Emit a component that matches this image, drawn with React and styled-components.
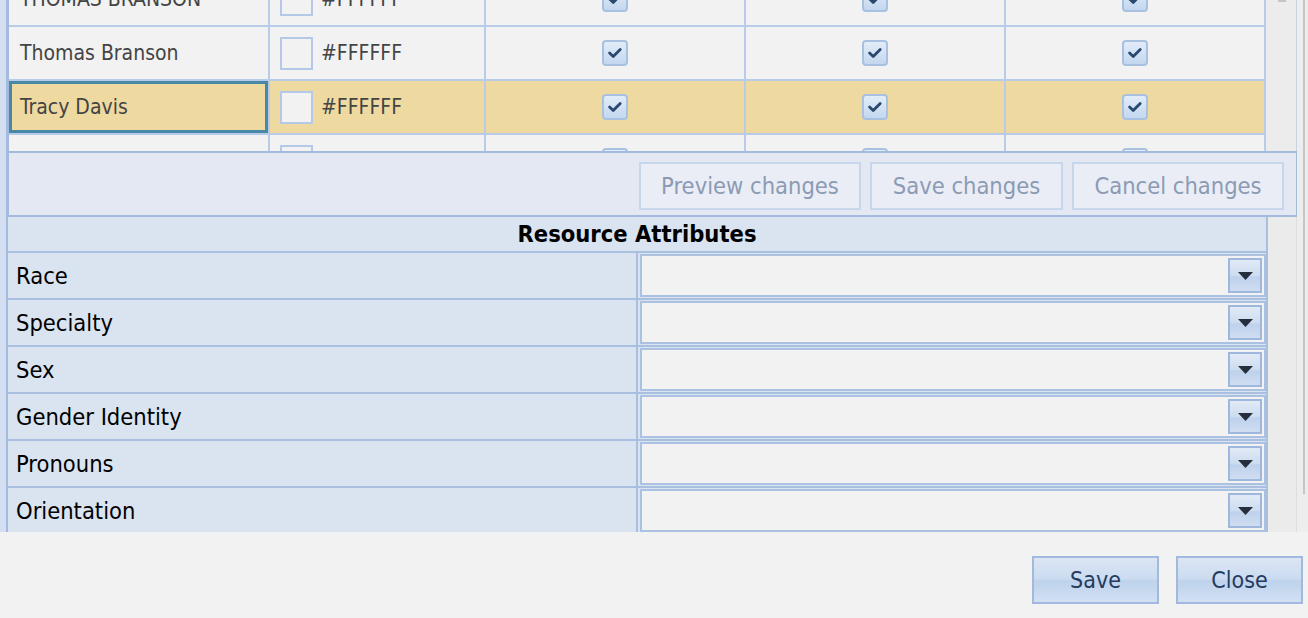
import React from "react";
import styled, { createGlobalStyle } from "styled-components";

const GlobalStyle = createGlobalStyle`
  html, body {
    margin: 0;
    padding: 0;
    background: #f2f2f2;
    overflow: hidden;
  }
  body {
    font-family: "DejaVu Sans Condensed", "DejaVu Sans", sans-serif;
    font-stretch: condensed;
  }
`;

const people = [
  { name: "THOMAS BRANSON", color: "#FFFFFF" },
  { name: "Thomas Branson", color: "#FFFFFF" },
  { name: "Tracy Davis", color: "#FFFFFF", selected: true },
  { name: "", color: "" },
];

const attributes = ["Race", "Specialty", "Sex", "Gender Identity", "Pronouns", "Orientation"];

const Check = () => (
  <CheckBox>
    <svg width="18" height="18" viewBox="0 0 18 18">
      <path d="M3.6 9 L7.2 12.4 L14.2 5.4" fill="none" stroke="#2a4870" strokeWidth="2.8" strokeLinecap="round" strokeLinejoin="round" />
    </svg>
  </CheckBox>
);

const App = () => {
  return (
    <Page>
      <GlobalStyle />
      <Workspace>
        <FormPanel>
          <FormBody>
            <GridPanel>
              <GridBody>
                <GridViewport>
                  <GridTable>
                    {people.map((p, i) => (
                      <GridRow key={i} $selected={p.selected}>
                        <NameCell $selected={p.selected}>{p.name}</NameCell>
                        <ColorCell>
                          <Swatch />
                          <span>{p.color}</span>
                        </ColorCell>
                        <CheckCell><Check /></CheckCell>
                        <CheckCell><Check /></CheckCell>
                        <CheckCell><Check /></CheckCell>
                      </GridRow>
                    ))}
                  </GridTable>
                </GridViewport>
                <GridScrollbar>
                  <ScrollNub />
                </GridScrollbar>
              </GridBody>
              <Toolbar>
                <ToolButton $w={222}>Preview changes</ToolButton>
                <ToolButton $w={193}>Save changes</ToolButton>
                <ToolButton $w={212}>Cancel changes</ToolButton>
              </Toolbar>
            </GridPanel>
            <AttrSection>
              <AttrTable>
                <AttrHeader>Resource Attributes</AttrHeader>
                {attributes.map((a) => (
                  <AttrRow key={a}>
                    <AttrLabel>{a}</AttrLabel>
                    <AttrValue>
                      <Combo>
                        <ComboTrigger>
                          <svg width="15" height="8" viewBox="0 0 15 8">
                            <polygon points="0,0 15,0 7.5,8" fill="#262e3e" />
                          </svg>
                        </ComboTrigger>
                      </Combo>
                    </AttrValue>
                  </AttrRow>
                ))}
              </AttrTable>
              <AttrFiller />
            </AttrSection>
          </FormBody>
        </FormPanel>
        <OuterScrollbar>
          <OuterThumb />
        </OuterScrollbar>
      </Workspace>
      <Footer>
        <FooterButton>Save</FooterButton>
        <FooterButton>Close</FooterButton>
      </Footer>
    </Page>
  );
};

const Page = styled.div`
  width: 1308px;
  height: 618px;
  display: flex;
  flex-direction: column;
  background: #f2f2f2;
`;

const Workspace = styled.div`
  display: flex;
  height: 532px;
  overflow: hidden;
`;

const FormPanel = styled.div`
  flex: 1;
  display: flex;
  border-left: 6px solid #d3def0;
  min-width: 0;
`;

const FormBody = styled.div`
  flex: 1;
  display: flex;
  flex-direction: column;
  border-left: 2px solid #a3b9de;
  min-width: 0;
`;

const GridPanel = styled.div`
  display: flex;
  flex-direction: column;
  border-left: 1px solid #a3b9de;
`;

const GridBody = styled.div`
  display: flex;
  height: 151px;
`;

const GridViewport = styled.div`
  width: 1257px;
  overflow: hidden;
`;

const GridTable = styled.div`
  margin-top: -27px;
`;

const GridRow = styled.div`
  display: flex;
  height: 54px;
  box-sizing: border-box;
  border-bottom: 2px solid #b8cce9;
  background: ${({ $selected }) => ($selected ? "#eed9a1" : "#f2f2f2")};
`;

const CellBase = styled.div`
  box-sizing: border-box;
  border-right: 2px solid #b8cce9;
  display: flex;
  align-items: center;
  font-size: 21px;
  color: #444;
  white-space: nowrap;
`;

const NameCell = styled(CellBase)`
  width: 261px;
  padding-left: 11px;
  box-shadow: ${({ $selected }) => ($selected ? "inset 0 0 0 3px #4788a7" : "none")};
`;

const ColorCell = styled(CellBase)`
  width: 216px;
  padding-left: 10px;
  gap: 8px;
`;

const Swatch = styled.span`
  width: 33px;
  height: 33px;
  box-sizing: border-box;
  border: 2px solid #b4c9e7;
  background: #f2f2f2;
`;

const CheckCell = styled(CellBase)`
  width: 260px;
  justify-content: center;
`;

const CheckBox = styled.span`
  width: 26px;
  height: 26px;
  box-sizing: border-box;
  border: 2px solid #a9c1e1;
  border-radius: 4px;
  background: linear-gradient(#e3edf9, #c3d7ef);
  display: flex;
  align-items: center;
  justify-content: center;
`;

const GridScrollbar = styled.div`
  width: 30px;
  background: #ececec;
  border-right: 1px solid #c9d2df;
`;

const ScrollNub = styled.div`
  width: 8px;
  height: 2px;
  margin-left: 12px;
  background: #c4c4c4;
`;

const Toolbar = styled.div`
  height: 66px;
  box-sizing: border-box;
  display: flex;
  justify-content: flex-end;
  align-items: flex-start;
  gap: 9px;
  padding: 9px 12px 0 0;
  background: #e3e8f3;
  border-top: 2px solid #a3b9de;
  border-bottom: 2px solid #a3b9de;
  border-right: 1px solid #a3b9de;
`;

const ToolButton = styled.button`
  width: ${({ $w }) => $w}px;
  height: 48px;
  box-sizing: border-box;
  border: 2px solid #c8d6ec;
  background: #eaedf5;
  color: #8b9bb4;
  font-family: inherit;
  font-stretch: condensed;
  font-size: 23.5px;
  padding: 0;
`;

const AttrSection = styled.div`
  flex: 1;
  display: flex;
`;

const AttrTable = styled.div`
  width: 1260px;
  box-sizing: border-box;
  background: #dae3f0;
  border-right: 2px solid #a8bfe0;
  display: flex;
  flex-direction: column;
`;

const AttrHeader = styled.div`
  height: 36px;
  flex-shrink: 0;
  box-sizing: border-box;
  border-bottom: 2px solid #a8bfe0;
  display: flex;
  align-items: center;
  justify-content: center;
  font-weight: bold;
  font-size: 23.5px;
  color: #000;
`;

const AttrRow = styled.div`
  display: grid;
  grid-template-columns: 630px 1fr;
  height: 47px;
  flex-shrink: 0;
  box-sizing: border-box;
  border-bottom: 2px solid #a8bfe0;
`;

const AttrLabel = styled.div`
  box-sizing: border-box;
  border-right: 2px solid #a8bfe0;
  padding-left: 8px;
  display: flex;
  align-items: center;
  font-size: 23.5px;
  color: #000;
`;

const AttrValue = styled.div`
  padding: 1px 0 1px 2px;
  display: flex;
`;

const Combo = styled.div`
  flex: 1;
  box-sizing: border-box;
  display: flex;
  justify-content: flex-end;
  align-items: center;
  padding-right: 2px;
  border: 2px solid #abc1e1;
  background: #f2f2f2;
`;

const ComboTrigger = styled.span`
  width: 34px;
  height: 35px;
  box-sizing: border-box;
  border: 2px solid #9db7dd;
  background: linear-gradient(#e2eaf6, #cddcf0 50%, #bed1ec 55%, #d0ddf1);
  display: flex;
  align-items: center;
  justify-content: center;
`;

const AttrFiller = styled.div`
  flex: 1;
  background: #ebebeb;
  border-right: 1px solid #dedede;
`;

const OuterScrollbar = styled.div`
  width: 11px;
  background: #ededed;
  display: flex;
`;

const OuterThumb = styled.div`
  margin-left: 6px;
  width: 2px;
  height: 494px;
  background: #c6c6c6;
`;

const Footer = styled.div`
  flex: 1;
  display: flex;
  justify-content: flex-end;
  align-items: flex-start;
  gap: 17px;
  padding: 24px 5px 0 0;
`;

const FooterButton = styled.button`
  width: 127px;
  height: 48px;
  box-sizing: border-box;
  border: 2px solid #a0b9dc;
  background: linear-gradient(#dce6f4, #cbdbf0 48%, #bed2ec 52%, #d2e0f3);
  color: #243b5d;
  font-family: inherit;
  font-stretch: condensed;
  font-size: 23px;
  padding: 0;
`;

export default App;
